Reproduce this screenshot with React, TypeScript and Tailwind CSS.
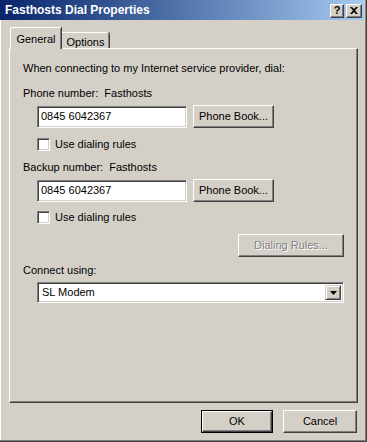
import React from "react";

const font = { fontFamily: '"Liberation Sans", Arial, sans-serif' };

function Btn({ children, w, def, disabled }: { children: React.ReactNode; w: string; def?: boolean; disabled?: boolean }) {
  const inner = (
    <div
      className={`h-full w-full flex items-center justify-center border border-t-white border-l-white border-b-[#404040] border-r-[#404040] shadow-[inset_-1px_-1px_0_#808080,inset_1px_1px_0_#d4d0c8] ${
        disabled ? "text-[#808080] [text-shadow:1px_1px_0_#ffffff]" : "text-black"
      }`}
    >
      {children}
    </div>
  );
  if (def) {
    return <div className={`${w} h-[23px] border border-black`}>{inner}</div>;
  }
  return <div className={`${w} h-[23px]`}>{inner}</div>;
}

function Input({ value, w }: { value: string; w: string }) {
  return (
    <div className={`${w} h-[22px] bg-white border border-t-[#808080] border-l-[#808080] border-b-white border-r-white shadow-[inset_1px_1px_0_#404040,inset_-1px_-1px_0_#d4d0c8] flex items-center pl-[3px] text-black`}>
      {value}
    </div>
  );
}

function Check({ label }: { label: string }) {
  return (
    <div className="flex items-center h-[13px] ml-[14px]">
      <div className="w-[13px] h-[13px] bg-white border border-t-[#808080] border-l-[#808080] border-b-white border-r-white shadow-[inset_1px_1px_0_#404040,inset_-1px_-1px_0_#d4d0c8]" />
      <span className="ml-[5px] leading-[13px]">{label}</span>
    </div>
  );
}

export default function App() {
  return (
    <div
      className="w-[367px] h-[442px] bg-[#d4d0c8] text-[11px] text-black flex flex-col shadow-[inset_-1px_-1px_0_#404040,inset_-2px_-2px_0_#808080,inset_1px_0_0_#ffffff] overflow-hidden"
      style={font}
    >
      {/* Title bar */}
      <div className="h-[20px] mr-[3px] flex items-center bg-gradient-to-r from-[#0a246a] to-[#a6caf0]">
        <span className="ml-[5px] text-white font-bold text-[12px] leading-none">Fasthosts Dial Properties</span>
        <div className="ml-auto flex mr-[2px] mt-[1px]">
          <div className="w-[14px] h-[14px] bg-[#d4d0c8] border border-t-white border-l-white border-b-[#404040] border-r-[#404040] shadow-[inset_-1px_-1px_0_#808080] flex items-center justify-center font-bold text-[11px] leading-none">
            ?
          </div>
          <div className="w-[16px] h-[14px] ml-[2px] bg-[#d4d0c8] border border-t-white border-l-white border-b-[#404040] border-r-[#404040] shadow-[inset_-1px_-1px_0_#808080] flex items-center justify-center">
            <svg width="8" height="7" viewBox="0 0 8 7">
              <path d="M0 0 L2 0 L4 2 L6 0 L8 0 L5 3.5 L8 7 L6 7 L4 5 L2 7 L0 7 L3 3.5 Z" fill="#000" />
            </svg>
          </div>
        </div>
      </div>

      {/* Tabs */}
      <div className="flex items-end ml-[10px] mt-[7px] h-[21px] relative z-10">
        <div className="w-[51px] bg-[#d4d0c8] border-t border-l border-t-white border-l-white rounded-tl-[2px] shadow-[inset_-1px_0_0_#808080,1px_0_0_#404040] flex items-start justify-center pt-[3px] -mb-[1px] h-[22px]">
          General
        </div>
        <div className="w-[47px] h-[16px] bg-[#d4d0c8] border-t border-t-white rounded-tr-[2px] shadow-[inset_-1px_0_0_#808080,1px_0_0_#404040] flex items-start justify-center pt-[1px] ml-[1px]">
          Options
        </div>
      </div>

      {/* Panel */}
      <div className="ml-[9px] w-[349px] h-[355px] border border-t-white border-l-white border-b-[#404040] border-r-[#404040] shadow-[inset_-1px_-1px_0_#808080] flex flex-col pl-[13px] pr-[13px]">
        <div className="mt-[13px] leading-[13px]">When connecting to my Internet service provider, dial:</div>
        <div className="mt-[12px] leading-[13px]">Phone number:&nbsp; Fasthosts</div>
        <div className="mt-[5px] flex items-center ml-[14px]">
          <Input value="0845 6042367" w="w-[150px]" />
          <div className="ml-[6px]">
            <Btn w="w-[81px]">Phone Book...</Btn>
          </div>
        </div>
        <div className="mt-[10px]">
          <Check label="Use dialing rules" />
        </div>
        <div className="mt-[10px] leading-[13px]">Backup number:&nbsp; Fasthosts</div>
        <div className="mt-[5px] flex items-center ml-[14px]">
          <Input value="0845 6042367" w="w-[150px]" />
          <div className="ml-[6px]">
            <Btn w="w-[81px]">Phone Book...</Btn>
          </div>
        </div>
        <div className="mt-[9px]">
          <Check label="Use dialing rules" />
        </div>
        <div className="mt-[10px] flex justify-end">
          <Btn w="w-[106px]" disabled>
            Dialing Rules...
          </Btn>
        </div>
        <div className="mt-[7px] leading-[13px]">Connect using:</div>
        <div className="mt-[5px] ml-[14px] h-[21px] bg-white border border-t-[#808080] border-l-[#808080] border-b-white border-r-white shadow-[inset_1px_1px_0_#404040,inset_-1px_-1px_0_#d4d0c8] flex items-center p-[2px]">
          <span className="pl-[2px] flex-1">SL Modem</span>
          <div className="w-[16px] h-[15px] bg-[#d4d0c8] border border-t-[#d4d0c8] border-l-[#d4d0c8] border-b-[#404040] border-r-[#404040] shadow-[inset_1px_1px_0_#ffffff,inset_-1px_-1px_0_#808080] flex items-center justify-center">
            <svg width="7" height="4" viewBox="0 0 7 4">
              <path d="M0 0 H7 L3.5 4 Z" fill="#000" />
            </svg>
          </div>
        </div>
      </div>

      {/* Bottom buttons */}
      <div className="mt-[7px] flex justify-end mr-[10px] gap-[10px]">
        <Btn w="w-[72px]" def>
          OK
        </Btn>
        <Btn w="w-[74px]">Cancel</Btn>
      </div>
    </div>
  );
}
